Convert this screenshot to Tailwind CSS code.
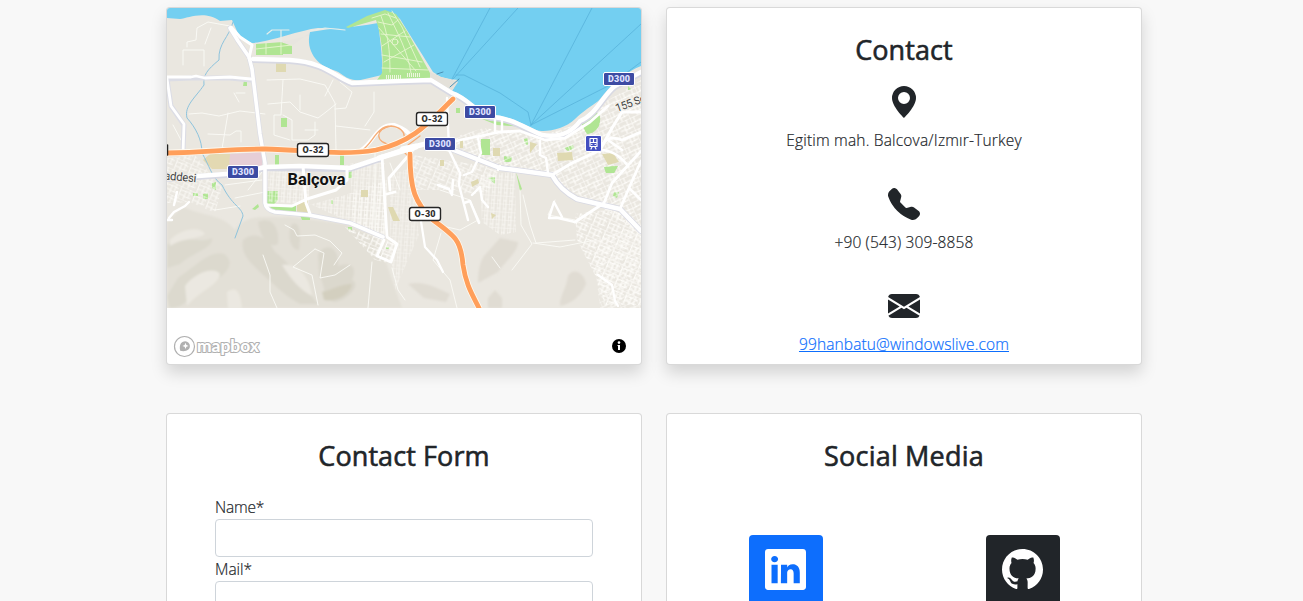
<!DOCTYPE html>
<html lang="en">
<head>
<meta charset="utf-8">
<title>Contact</title>
<script src="https://cdn.jsdelivr.net/npm/@tailwindcss/browser@4"></script>
</head>
<body class="bg-[#f8f8f8] text-[#212529] font-['Open_Sans','Noto_Sans',sans-serif] h-[601px] overflow-hidden">
<main class="w-[976px] ml-[166px] pt-[7px] grid grid-cols-2 gap-x-6 gap-y-12">

  <section class="relative h-[358px] bg-white border border-black/15 rounded overflow-hidden shadow-[0_8px_16px_rgba(0,0,0,0.15)]">
    <svg class="block w-[474px] h-[300px]" viewBox="167 8 474 300" fill="none" stroke-linecap="round" stroke-linejoin="round">
      <defs>
        <pattern id="st1" width="6" height="8" patternUnits="userSpaceOnUse" patternTransform="rotate(4)"><path d="M0 0H6M3 0V8M0 5H3M0 0V8" stroke="#fffefb" stroke-width=".9"/></pattern>
        <pattern id="st2" width="17" height="13" patternUnits="userSpaceOnUse" patternTransform="rotate(-24)"><path d="M0 0H17M0 0V13M4 0V6M0 6L9 5L17 6M9 5V13M13 0V10M4 9H9M9 10L17 9" stroke="#fffefb" stroke-width="1"/></pattern>
        <pattern id="st3" width="15" height="12" patternUnits="userSpaceOnUse" patternTransform="rotate(24)"><path d="M0 0H15M2 0L3 12M3 4L10 3L15 4M8 3V12M12 0V9M3 8H8M8 9L15 8" stroke="#fffefb" stroke-width="1"/></pattern>
        <filter id="soft"><feGaussianBlur stdDeviation="1.3"/></filter>
      </defs>
      <rect x="167" y="8" width="474" height="300" fill="#eae7e0"/>
      <!-- hills -->
      <g filter="url(#soft)">
        <path d="M167 221L183 207C205 217 222 214 235 230C246 213 265 218 290 217L345 224L375 237L386 262L392 280L402 308H167Z" fill="#e3e0d7"/>
        <path d="M167 245C185 233 198 245 212 238C214 248 190 254 180 264L167 268ZM178 278C196 266 210 250 224 254C236 262 228 276 206 284C194 292 186 308 170 308L167 296Z" fill="#dcd9ce"/>
        <path d="M258 222C270 216 280 225 278 244C268 250 260 235 258 222ZM243 240C255 230 268 238 275 252C290 262 300 282 318 304L300 304C285 296 275 285 262 274C250 262 240 254 243 240ZM292 224C302 220 300 240 299 250C291 250 286 236 292 224ZM318 254C328 240 340 250 338 266C350 262 358 266 352 280C362 284 348 300 335 302C322 300 326 285 319 276Z" fill="#dbd8cd"/>
        <path d="M322 292C332 290 340 284 352 284C350 296 334 302 324 300Z" fill="#d3cfbf"/>
        <path d="M185 286C195 272 215 266 220 274C218 286 200 290 187 306ZM227 292C236 286 240 290 242 308H228ZM170 240C182 228 200 226 205 234C195 240 182 238 170 246ZM282 265C300 262 310 280 312 296C300 290 290 278 282 265Z" fill="#ebe8e1"/>
        <path d="M484 256L500 238L518 242C518 252 505 262 498 272L478 283C478 270 480 262 484 256ZM568 276C574 266 585 274 586 284C580 298 570 304 560 306C560 294 566 290 568 276ZM488 298L495 290L502 298V308H488ZM408 284C425 280 440 290 450 294L446 302L424 298Z" fill="#e0dcd3"/>
      </g>
      <!-- parks and special areas -->
      <path d="M210 154H230V169H212L203 160Z" fill="#e3d9b2"/><path d="M230 154L262 152V166L229 168Z" fill="#e6ced6"/>
      <g fill="#b0e593">
        <path d="M256 44L283 42V55H256ZM283 43H292V54H283ZM267 191H278V200L273 205H267ZM267 207L296 205V214L277 214L267 210ZM300 215H310V220H302ZM252 209L258 204L259 207L255 210ZM281 118H287V127H281ZM244 80H247V86H243ZM203 194L208 193V199H203ZM275 155H279V165H275ZM340 154H344V165H340ZM349 170H352V178H348ZM193 193H198V196H193ZM212 183L216 182V190L212 188ZM331 200H333V204H331ZM386 247H389V249H386ZM348 227H352V230H348ZM481 139H490V155H481ZM482 119L515 122L525 127L497 125ZM516 172L522 189L520 191ZM488 178L495 177V184ZM504 156L512 157L511 162L504 162ZM582 125C584 112 597 108 600 117C601 127 595 133 587 134ZM604 167L618 166L614 173L606 173ZM614 192L619 192L617 198L613 196ZM524 139L528 138V146L524 143ZM456 108H460V113H456ZM564 148L573 145L574 149L568 151ZM628 86L632 90L628 90Z"/>
      </g>
      <!-- minor streets -->
      <g>
        <path d="M267 169L309 169L309 205L345 195L387 180V237L345 220L310 204L267 202Z" fill="url(#st1)" opacity=".8"/>
        <path d="M350 163H385V238L353 225Z" fill="url(#st1)" opacity=".7"/>
        <path d="M345 227L383 239L396 243L392 264L375 260Z" fill="url(#st3)"/>
        <path d="M390 175L411 168L419 235L395 290L390 250Z" fill="url(#st1)" opacity=".6"/>
        <path d="M480 175L515 172L516 232L500 235L482 222Z" fill="url(#st1)" opacity=".8"/>
        <path d="M412 155L500 168L490 190L470 195L455 190L415 190Z" fill="url(#st3)" opacity=".8"/>
        <path d="M444 140L484 128L540 136L575 125L600 105L641 80V235L600 206L560 186L552 175L500 165L440 150Z" fill="url(#st2)"/>
        <path d="M575 214L621 208L641 235V305H605L595 275L577 240Z" fill="url(#st3)"/>
        <path d="M592 240L641 225V308H600Z" fill="url(#st2)" opacity=".7"/>
        <path d="M167 158L195 155L222 188L215 213L190 202L167 203Z" fill="url(#st3)" opacity=".75"/>
      </g>
      <g fill="#dfd9b1"><path d="M276 62H286V72H276ZM297 202L308 200V213H297ZM361 190H368V197H361ZM388 207L393 207L400 221H393ZM471 182L478 179L479 183L472 187ZM530 142L537 144L530 153ZM602 154L613 153L619 162L608 165ZM493 148H500V156H493ZM557 153L572 152L573 160L558 161ZM440 160H444V166H440ZM460 139H463V148H460ZM491 213L496 215L492 219Z"/></g>
      <path d="M582 125C584 112 597 108 600 117C601 127 595 133 587 134ZM604 167L618 166L614 173L606 173ZM481 139H490V155H481Z" fill="#b0e593"/>
      <g stroke="#fbfaf6" stroke-width=".9">
        <path d="M183 65V50H204V66M187 47V42L196 40L197 28L208 22L230 26M205 44L211 28M236 93H245M239 102L234 93M189 114L202 113L219 116L240 111L265 114M228 113L222 149M208 134L230 135L236 131H241V142M268 104L290 102L300 112L318 118L326 112L336 104M267 80L300 79L325 85L335 103L336 150M283 80L281 115H274V135L290 140M283 115L292 120V140H308L315 135V122M333 80L325 96M340 82L352 92L346 108L335 109M374 92V112L365 126M336 126L370 130M300 110V95M305 130H318M173 125L181 140"/>
        <path d="M263 255L270 275V292L277 308M285 225L294 230L297 236L315 235L330 241L342 253L334 265M315 249L293 267L312 275L318 305M315 249L324 253L320 278L335 275L350 265M520 190L521 225L532 244L512 270M523 195L530 225L536 243L575 240M533 243L560 247L590 241M555 200L548 215L575 220M500 268L492 257M447 227L460 230L478 220M441 233L433 260L450 280L457 308M440 190L470 200L480 222M372 262L368 308M392 268L398 290L405 300"/>
        <path d="M225 185L262 180M235 198L265 192M215 210L240 206M248 190L262 172M390 163L400 190M375 150V237"/>
      </g>
      <!-- creek -->
      <path d="M233 22C229 38 218 43 219 60C207 70 203 75 204 85C195 98 184 106 187 118C196 128 202 140 202 153C209 165 212 178 222 185C232 206 242 207 243 216L235 238" stroke="#8dc3dd" stroke-width="1"/>
      <!-- sea -->
      <path d="M167 8H641V66C626 72 620 80 611 86C604 101 588 106 575 119C565 129 545 133 536 130C520 121 497 117 481 116L462 98L452 91L458 80L450 79L441 77L433 72L400 19L392 12L375 18L347 28C351 25 354 23 360 20L352 28L344 29L318 28C300 30 270 42 252 43L240 38L232 20L220 21C205 10 188 18 180 19L167 18Z" fill="#73cff1"/>
      <path d="M343 28L318 31L309 33L300 40L292 46L281 42Z" fill="#e8e5df"/>
      <path d="M310 32C333 28 350 28 378 23C381 45 383 62 382 75L365 79C347 84 343 72 333 70C318 66 305 51 310 32Z" fill="#73cff1"/>
      <path d="M310 31L325 28L345 30M267 34L272 30H289M281 30V42" stroke="#e4eeeb" stroke-width="1.2"/>
      <path d="M346 27L367 16L385 10L396 14L408 33L430 73L430 80L377 80L382 73C384 55 381 35 376 20L348 28Z" fill="#b0e593"/>
      <path d="M372 18L385 14L396 18M378 22L392 25L398 20M381 34L410 37M382 55L422 62M382 68L428 70M381 16C388 34 390 50 390 72M388 13C398 34 408 52 411 73M392 11L402 27L420 67M384 62L414 45M382 46L405 31M379 28L416 71" stroke="#e6f5cf" stroke-width=".9"/><circle cx="395" cy="42" r="3" fill="#b0e593" stroke="#e6f5cf"/>
      <path d="M386 77H402M407 75H420" stroke="#eef5df" stroke-width="4" stroke-dasharray="1 1" stroke-linecap="butt"/>
      <path d="M256 49L292 45M266 43V54M281 43V54" stroke="#e6f5cf" stroke-width=".9"/>
      <path d="M452 79L490 8M453 79L518 8M456 75L464 75L500 93L528 112L531 125M531 125L592 8M531 125L641 24M531 125L610 85L641 62" stroke="#58b3db" stroke-width=".8"/>
      <path d="M430 72L441 77L452 80L458 82L452 91L430 79Z" fill="#e4e1da"/>
      <path d="M437 74L443 72M450 87L459 79" stroke="#4c91b5" stroke-width="1"/>
      <!-- road casings -->
      <path d="M167 79L191 78L230 78L251 80M167 79L171 106L184 125L183 153M230 28L238 41L249 57L252 69L260 134L265 163L265 203Q266 210 275 212L309 215L350 223L383 237" stroke="#dcdde5" stroke-width="5"/>
      <path d="M451 149L500 168L552 175Q560 190 577 199L620 209L641 231M253 60L290 61C325 63 335 78 352 84L400 82L431 81L452 94C468 99 475 113 490 118C510 118 525 129 542 136C560 139 572 133 580 122C596 116 603 96 615 87L641 73M167 179L240 174L265 168L350 169L380 159" stroke="#d8d9e3" stroke-width="6"/>
      <!-- main roads -->
      <g stroke="#fff">
        <path d="M167 77L191 77L196 76L205 78L230 77L251 79M167 79L171 106L184 124L183 153" stroke-width="2.8"/>
        <path d="M230 28L238 41L249 57L252 69L260 134L265 163L265 203Q266 210 275 212L309 215L350 223L383 237" stroke-width="3.6"/>
        <path d="M249 58L252 45L240 37L231 27" stroke-width="3"/>
        <path d="M253 59L290 60C325 62 335 77 352 83L400 81L431 80L452 93C468 98 475 112 490 117C510 117 525 128 542 135C560 138 572 132 580 121C596 115 603 95 615 86L641 72" stroke-width="4.4"/>
        <path d="M167 179L198 176L240 173L265 167L300 166L350 168L380 158L408 148" stroke-width="4.5"/>
        <path d="M303 166L306 203L310 214M267 205L292 206L307 199L336 190L347 180V167" stroke-width="3"/>
        <path d="M382 156L387 237L397 244L391 262L377 256L384 240M387 194L395 192M390 190L389 178L408 156" stroke-width="2.8"/>
        <path d="M440 146L460 140L500 132L520 131L545 140L565 138L590 122L608 106" stroke-width="2.8"/>
        <path d="M552 175L572 163L600 150L612 128L622 112H641" stroke-width="3"/>
        <path d="M440 145L451 149L500 168L552 175Q560 190 577 199L620 209L641 231" stroke-width="4.4"/>
        <path d="M620 209L629 188L641 161M575 222L604 203L612 183L641 151M629 188L641 200M600 152C602 138 612 136 622 140L641 132M600 150C612 150 622 158 628 166M608 140L622 150" stroke-width="2.7"/>
        <path d="M540 141V155L546 158L548 173M495 120V131M502 121V131M478 138L481 153L472 172L464 175M498 170L500 166M447 98L449 150L460 173L459 185L468 220M464 203L470 201L479 223M438 185L449 189L452 195L453 180M472 195L480 187L482 200L488 207M575 222L558 218H549L554 202L562 217" stroke-width="2.4"/>
        <path d="M420 215L425 247L437 260L443 272M598 275L612 285L615 301L618 306" stroke-width="2.2"/>
        <path d="M169 218L174 212L185 206L189 202M174 205L177 192M167 220H172" stroke-width="2.4"/>
      </g>
      <path d="M361 150C373 144 376 124 394 125C413 132 414 139 400 143" stroke="#fff" stroke-width="4"/>
      <path d="M361 151C373 144 376 126 391 126C410 128 407 146 392 145C374 142 375 129 391 126M398 144L416 134M408 145L420 136M402 150L409 157" stroke="#f5ad77" stroke-width="1.3"/>
      <path d="M379 158L416 147M402 150L440 140" stroke="#fff" stroke-width="5"/>
      <!-- motorways -->
      <g stroke="#fffaf0" stroke-width="6.4"><path d="M167 153C210 152 230 149 265 149C310 150 340 156 376 150C415 141 430 121 453 99M410 154C410 190 415 203 433 220C455 236 461 240 463 265C466 285 472 294 479 308"/></g>
      <g stroke="#ff9f5b" stroke-width="4.8"><path d="M167 153C210 152 230 149 265 149C310 150 340 156 376 150C415 141 430 121 453 99M410 154C410 190 415 203 433 220C455 236 461 240 463 265C466 285 472 294 479 308"/></g>
      <path d="M402 148L416 145M400 151L413 150" stroke="#fff" stroke-width="3"/>
      <!-- road shields -->
      <g stroke="#262626" stroke-width="1.4" fill="#fff"><rect x="297.5" y="143.5" width="31" height="13" rx="2.2"/><rect x="416.5" y="112.5" width="31" height="13" rx="2.2"/><rect x="409.5" y="207.5" width="31" height="13" rx="2.2"/></g>
      <path d="M167.5 145V155" stroke="#222" stroke-width="1.5"/>
      <g fill="#3d4ba3" stroke="#fff" stroke-width="1"><rect x="227.5" y="165.5" width="31" height="13" rx="1.5"/><rect x="464.5" y="105.5" width="31" height="13" rx="1.5"/><rect x="424.5" y="137.5" width="31" height="13" rx="1.5"/><rect x="603.5" y="72.5" width="31" height="13" rx="1.5"/></g>
      <rect x="585.5" y="135.5" width="16" height="16" rx="1.5" fill="#434fc0" stroke="#fff"/>
      <g class="font-[Roboto,sans-serif] font-black" font-size="9" text-anchor="middle">
        <g fill="#303030"><text x="313" y="153.3" textLength="21">O-32</text><text x="432" y="122.3" textLength="21">O-32</text><text x="425" y="217.3" textLength="21">O-30</text></g>
        <g fill="#dfe1ff"><text x="243" y="175.3" textLength="22">D300</text><text x="480" y="115.3" textLength="22">D300</text><text x="440" y="147.3" textLength="22">D300</text><text x="619" y="82.3" textLength="22">D300</text></g>
      </g>
      <path d="M590 138.5H597V146.5H590ZM590 142.5H597M593.5 139V142M591 149L592 147M596 149L595 147M591.5 144.5H592M595 144.5H595.5" stroke="#fff" stroke-width="1.2"/>
      <g class="font-[Roboto,sans-serif]" paint-order="stroke" stroke="#f2f0eb" stroke-width="2">
        <text x="287.5" y="185" font-size="16.5" class="font-bold" fill="#111" textLength="58" lengthAdjust="spacingAndGlyphs">Balçova</text>
        <text x="164" y="179.5" font-size="11.5" fill="#444" textLength="32" transform="rotate(5 164 180)">addesi</text>
        <text x="617" y="112" font-size="11" fill="#444" transform="rotate(-20 617 112)" textLength="37">155 Sok</text>
      </g>
    </svg>
    <div class="h-14 flex items-start justify-between pt-[27px] pl-[6px] pr-[15px]">
      <svg class="w-[90px] h-[24px]" viewBox="173 335 90 24">
        <circle cx="184.5" cy="346.5" r="10" fill="#fff" stroke="#b0b0b0" stroke-width="1.2"/>
        <path d="M180.200 350.800C179 345 181 341.300 185.300 341.300A4.700 4.700 0 0 1 189.900 346C189.900 350 186 352 180.200 350.800Z" fill="#b0b0b0"/>
        <path d="M185.500 342.800L186.400 345L188.600 345.900L186.400 346.800L185.500 349L184.600 346.800L182.400 345.900L184.600 345Z" fill="#fff"/>
        <text x="197" y="351.700" font-size="16" textLength="62" lengthAdjust="spacingAndGlyphs" class="font-[Lato,sans-serif] font-black" fill="#fff" stroke="#b0b0b0" stroke-width="2" stroke-linejoin="round" paint-order="stroke">mapbox</text>
      </svg>
      <svg class="w-[14px] h-[14px] mt-[4px]" viewBox="0 0 14 14"><circle cx="7" cy="7" r="7" fill="#000"/><circle cx="7" cy="3.6" r="1.3" fill="#fff"/><path d="M5.500 6H8V11H6V7H5.500Z" fill="#fff"/></svg>
    </div>
  </section>

  <section class="h-[358px] bg-white border border-black/15 rounded flex flex-col items-center shadow-[0_8px_16px_rgba(0,0,0,0.15)]">
    <h2 class="mt-[25px] h-[34px] leading-[34px] text-[27px] font-normal [-webkit-text-stroke:0.6px_#212529] tracking-[0.1px]">Contact</h2>
    <svg class="mt-[19px] w-8 h-8" viewBox="0 0 16 16" fill="currentColor"><path d="M8 16s6-5.686 6-10A6 6 0 0 0 2 6c0 4.314 6 10 6 10m0-7a3 3 0 1 1 0-6 3 3 0 0 1 0 6"/></svg>
    <p class="mt-[10px] h-6 leading-6 text-[15.5px] font-light tracking-[0.19px] [-webkit-text-stroke:0.2px_#212529]">Egitim mah. Balcova/Izmır-Turkey</p>
    <svg class="mt-[36px] w-8 h-8" viewBox="0 0 16 16" fill="currentColor"><path d="M1.885.511a1.745 1.745 0 0 1 2.610.163L6.290 2.980c.329.423.445.974.315 1.494l-.547 2.190a.68.68 0 0 0 .178.643l2.457 2.457a.68.68 0 0 0 .644.178l2.189-.547a1.750 1.750 0 0 1 1.494.315l2.306 1.794c.829.645.905 1.870.163 2.611l-1.034 1.034c-.74.74-1.846 1.065-2.877.702a18.600 18.600 0 0 1-7.010-4.420 18.600 18.600 0 0 1-4.420-7.009c-.362-1.030-.037-2.137.703-2.877z"/></svg>
    <p class="mt-[10px] h-6 leading-6 text-[15.5px] font-light tracking-[0.14px] [-webkit-text-stroke:0.2px_#212529]">+90 (543) 309-8858</p>
    <svg class="mt-[36px] w-8 h-8" viewBox="0 0 16 16" fill="currentColor"><path d="M.05 3.555A2 2 0 0 1 2 2h12a2 2 0 0 1 1.950 1.555L8 8.414zM0 4.697v7.104l5.803-3.558zM6.761 8.830l-6.570 4.027A2 2 0 0 0 2 14h12a2 2 0 0 0 1.808-1.144l-6.570-4.027L8 9.586zm3.436-.586L16 11.801V4.697z"/></svg>
    <a class="mt-[10px] h-6 leading-6 text-[15.5px] font-light tracking-[0.13px] [-webkit-text-stroke:0.2px_#0d6efd] text-[#0d6efd] underline" href="mailto:99hanbatu@windowslive.com">99hanbatu@windowslive.com</a>
  </section>

  <section class="h-[188px] bg-white border border-b-0 border-black/15 rounded-t px-12 overflow-hidden">
    <h2 class="mt-[25px] h-[34px] leading-[34px] text-[27px] font-normal [-webkit-text-stroke:0.6px_#212529] tracking-[0.1px] text-center">Contact Form</h2>
    <form class="mt-[22px] flex flex-col">
      <label class="h-6 leading-6 text-[15.5px] font-light tracking-[-0.2px] [-webkit-text-stroke:0.2px_#212529]" for="name">Name*</label>
      <input id="name" class="h-[38px] border border-[#ced4da] rounded bg-white px-3">
      <label class="h-6 leading-6 text-[15.5px] font-light [-webkit-text-stroke:0.2px_#212529]" for="mail">Mail*</label>
      <input id="mail" class="h-[38px] border border-[#ced4da] rounded bg-white px-3">
    </form>
  </section>

  <section class="h-[188px] bg-white border border-b-0 border-black/15 rounded-t overflow-hidden">
    <h2 class="mt-[25px] h-[34px] leading-[34px] text-[27px] font-normal [-webkit-text-stroke:0.6px_#212529] tracking-[0.2px] text-center">Social Media</h2>
    <div class="mt-[62px] grid grid-cols-2 justify-items-center">
      <a href="#" aria-label="LinkedIn" class="w-[74px] h-[66px] pt-[14px] flex justify-center rounded-t bg-[#0d6efd] text-white"><svg class="w-[41px] h-[41px]" viewBox="0 0 16 16" fill="currentColor"><path d="M0 1.146C0 .513.526 0 1.175 0h13.650C15.474 0 16 .513 16 1.146v13.708c0 .633-.526 1.146-1.175 1.146H1.175C.526 16 0 15.487 0 14.854zm4.943 12.248V6.169H2.542v7.225zm-1.200-8.212c.837 0 1.358-.554 1.358-1.248-.015-.709-.520-1.248-1.342-1.248S2.400 3.226 2.400 3.934c0 .694.521 1.248 1.327 1.248zm4.908 8.212V9.359c0-.216.016-.432.080-.586.173-.431.568-.878 1.232-.878.869 0 1.216.662 1.216 1.634v3.865h2.401V9.250c0-2.220-1.184-3.252-2.764-3.252-1.274 0-1.845.7-2.165 1.193v.025h-.016l.016-.025V6.169h-2.400c.03.678 0 7.225 0 7.225z"/></svg></a>
      <a href="#" aria-label="GitHub" class="w-[74px] h-[66px] pt-[14px] flex justify-center rounded-t bg-[#212529] text-white"><svg class="w-[41px] h-[41px]" viewBox="0 0 16 16" fill="currentColor"><path d="M8 0C3.580 0 0 3.580 0 8c0 3.540 2.290 6.530 5.470 7.590.4.070.55-.170.55-.380 0-.190-.010-.820-.010-1.490-2.010.370-2.530-.490-2.690-.940-.090-.230-.480-.940-.820-1.130-.280-.150-.680-.520-.010-.530.630-.010 1.080.580 1.230.820.720 1.210 1.870.870 2.330.660.070-.520.280-.870.510-1.070-1.780-.200-3.640-.890-3.640-3.950 0-.870.310-1.590.820-2.120-.080-.200-.360-1.020.080-2.120 0 0 .670-.210 2.200.820.640-.180 1.320-.270 2-.270s1.360.090 2 .270c1.530-1.040 2.200-.820 2.200-.820.440 1.100.160 1.920.080 2.120.510.530.820 1.240.820 2.120 0 3.070-1.870 3.750-3.650 3.950.290.250.540.730.540 1.480 0 1.070-.010 1.930-.010 2.200 0 .210.150.460.550.380A8.010 8.010 0 0 0 16 8c0-4.420-3.580-8-8-8"/></svg></a>
    </div>
  </section>
</main>
</body>
</html>
